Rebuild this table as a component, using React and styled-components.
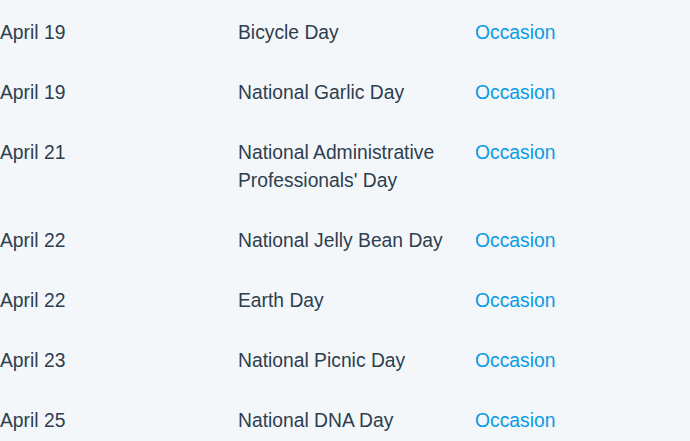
import React from "react";
import styled, { createGlobalStyle } from "styled-components";

const Global = createGlobalStyle`
  html, body { margin: 0; padding: 0; background: #f4f7fa; }
  body { font-family: "Liberation Sans", Arial, sans-serif; }
`;

const Table = styled.div`
  display: grid;
  grid-template-columns: 238px 237px 1fr;
  padding-top: 3px;
  width: 690px;
  height: 441px;
  overflow: hidden;
  align-content: start;
`;

const Cell = styled.div`
  padding: 16px 16px 16px 0;
  font-size: 19.3px;
  line-height: 28px;
  color: ${(p) => (p.$link ? "#0a9ae6" : "#2d3e4f")};
`;

const rows = [
  ["April 19", "Bicycle Day"],
  ["April 19", "National Garlic Day"],
  ["April 21", "National Administrative Professionals' Day"],
  ["April 22", "National Jelly Bean Day"],
  ["April 22", "Earth Day"],
  ["April 23", "National Picnic Day"],
  ["April 25", "National DNA Day"],
];

export default function App() {
  return (
    <>
      <Global />
      <Table>
        {rows.map(([d, n], i) => (
          <React.Fragment key={i}>
            <Cell>{d}</Cell>
            <Cell>{n}</Cell>
            <Cell $link>Occasion</Cell>
          </React.Fragment>
        ))}
      </Table>
    </>
  );
}
